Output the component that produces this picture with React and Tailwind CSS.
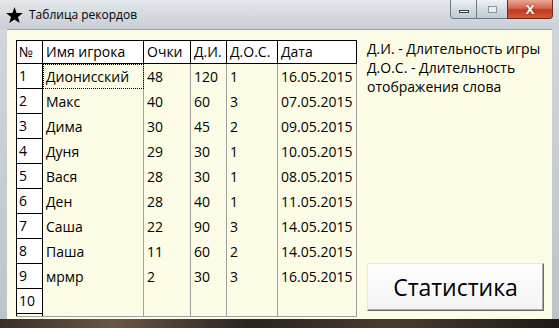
import React from "react";

const rows = [
  ["1", "Дионисский", "48", "120", "1", "16.05.2015"],
  ["2", "Макс", "40", "60", "3", "07.05.2015"],
  ["3", "Дима", "30", "45", "2", "09.05.2015"],
  ["4", "Дуня", "29", "30", "1", "10.05.2015"],
  ["5", "Вася", "28", "30", "1", "08.05.2015"],
  ["6", "Ден", "28", "40", "1", "11.05.2015"],
  ["7", "Саша", "22", "90", "3", "14.05.2015"],
  ["8", "Паша", "11", "60", "2", "14.05.2015"],
  ["9", "мрмр", "2", "30", "3", "16.05.2015"],
  ["10", "", "", "", "", ""],
];

const headers = ["Имя игрока", "Очки", "Д.И.", "Д.О.С.", "Дата"];
const widths = ["w-[101px]", "w-[47px]", "w-[36px]", "w-[51px]", "w-[79px]"];

const StarIcon = () => (
  <svg width="17" height="16" viewBox="0 0 24 23" className="shrink-0">
    <polygon points="12,0 15,8.5 24,8.8 17,14.3 19.5,23 12,18 4.5,23 7,14.3 0,8.8 9,8.5" fill="#000" />
  </svg>
);

const TitleBar = () => (
  <div className="h-[29px] flex items-start shrink-0 bg-[linear-gradient(to_bottom,#e4e8ec,#d2d8de_60%,#c9cfd6)]">
    <div className="flex items-center gap-[6px] pl-[6px] h-[29px]">
      <StarIcon />
      <span className="text-[12px] text-black">Таблица рекордов</span>
    </div>
    <div className="ml-auto mr-[6px] flex h-[19px]">
      <div className="w-[27px] h-[19px] border border-[#6d7a88] border-t-0 rounded-bl-[4px] bg-[linear-gradient(to_bottom,#eef1f4,#d6dce2_50%,#c2cad2)] flex items-end justify-center pb-[5px]">
        <div className="w-[10px] h-[3px] bg-white border border-[#3b4652]" />
      </div>
      <div className="w-[30px] h-[19px] border-b border-[#6d7a88] bg-[linear-gradient(to_bottom,#eef1f4,#d6dce2_50%,#c2cad2)] flex items-center justify-center">
        <div className="w-[9px] h-[7px] border border-[#8d97a2] bg-[#e8ecf0] mt-[1px]" />
      </div>
      <div className="w-[46px] h-[19px] border border-[#6a2a1c] border-t-0 rounded-br-[4px] bg-[linear-gradient(to_bottom,#e8a896,#d7664c_45%,#c13b20_55%,#d4573a)] flex items-center justify-center">
        <span className="text-white font-bold text-[13px] leading-none [text-shadow:0_0_2px_#5a1a0c]">X</span>
      </div>
    </div>
  </div>
);

const Grid = () => (
  <div className="ml-[9px] mt-[10px] h-[277px] flex flex-col border-b border-[#a0a0a0]">
    <div className="flex h-[24px] shrink-0">
      <div className="w-[27px] bg-white border border-black px-[2px] flex items-center">№</div>
      {headers.map((h, i) => (
        <div key={h} className={`${widths[i]} bg-white border-t border-b border-r border-black px-[3px] flex items-center`}>
          {h}
        </div>
      ))}
    </div>
    {rows.map((r) => (
      <div key={r[0]} className="flex h-[25px] shrink-0">
        <div className="w-[27px] bg-white border-l border-r border-b border-black px-[2px] flex items-center">{r[0]}</div>
        {r.slice(1).map((c, i) => (
          <div
            key={i}
            className={`${widths[i]} border-r border-[#a0a0a0] px-[3px] flex items-center ${
              r[0] === "1" && i === 0 ? "outline-1 outline-dotted outline-black -outline-offset-1" : ""
            }`}
          >
            {c}
          </div>
        ))}
      </div>
    ))}
    <div className="flex flex-1">
      <div className="w-[27px] border-l border-r border-black" />
      {widths.map((w, i) => (
        <div key={i} className={`${w} border-r border-[#a0a0a0]`} />
      ))}
    </div>
  </div>
);

export default function App() {
  return (
    <div className="w-[559px] h-[328px] overflow-hidden flex flex-col bg-[linear-gradient(to_bottom,#d2d8de,#bcc3ca)] font-['Open_Sans',sans-serif] text-black">
      <TitleBar />
      <div className="flex-1 flex px-[7px] pl-[7px] pr-[7px] min-h-0">
        <div className="flex-1 flex bg-[#fdfce7] border-t border-[#9aa3ac] text-[14px] leading-none">
          <Grid />
          <div className="flex-1 flex flex-col pl-[10px] pt-[9px]">
            <div className="leading-[19px]">
              <div>Д.И. - Длительность игры</div>
              <div>Д.О.С. - Длительность</div>
              <div>отображения слова</div>
            </div>
            <button className="mt-auto mb-[8px] mr-[8px] h-[48px] border border-t-[#e8e8e8] border-l-[#e8e8e8] border-b-[#6b6b6b] border-r-[#6b6b6b] bg-[linear-gradient(to_bottom,#ffffff,#f4f4f4)] shadow-[inset_-1px_-1px_0_#a9a9a9] text-[23px] flex items-center justify-center">
              Статистика
            </button>
          </div>
        </div>
      </div>
      <div className="h-[9px] shrink-0 bg-[linear-gradient(to_right,#3a2e28,#6a5646_20%,#2a2320_45%,#4a3b30_70%,#1e1a18)]" />
    </div>
  );
}
